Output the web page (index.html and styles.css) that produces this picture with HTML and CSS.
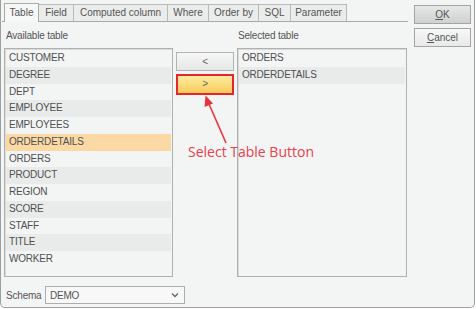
FILE: index.html
```html
<!DOCTYPE html>
<html>
<head>
<meta charset="utf-8">
<link rel="stylesheet" href="styles.css">
</head>
<body>
<div class="frame">
  <div class="main">
    <div class="tabs">
      <div class="tab active w-table">Table</div>
      <div class="tab w-field">Field</div>
      <div class="tab w-computed">Computed column</div>
      <div class="tab w-where">Where</div>
      <div class="tab w-order">Order by</div>
      <div class="tab w-sql">SQL</div>
      <div class="tab w-param">Parameter</div>
    </div>
    <div class="body">
      <div class="lbl">Available table</div>
      <div></div>
      <div class="lbl lbl-right">Selected table</div>
      <div class="list">
        <div class="row">CUSTOMER</div>
        <div class="row alt">DEGREE</div>
        <div class="row">DEPT</div>
        <div class="row alt">EMPLOYEE</div>
        <div class="row">EMPLOYEES</div>
        <div class="row sel">ORDERDETAILS</div>
        <div class="row">ORDERS</div>
        <div class="row alt">PRODUCT</div>
        <div class="row">REGION</div>
        <div class="row alt">SCORE</div>
        <div class="row">STAFF</div>
        <div class="row alt">TITLE</div>
        <div class="row">WORKER</div>
      </div>
      <div class="mid">
        <div class="mbtn">&lt;</div>
        <div class="mbtn hot">&gt;</div>
      </div>
      <div class="list">
        <div class="row">ORDERS</div>
        <div class="row alt">ORDERDETAILS</div>
      </div>
    </div>
    <div class="schema">
      <span class="slbl">Schema</span>
      <div class="select">
        <span>DEMO</span>
        <svg class="chev" width="8" height="6" viewBox="0 0 8 6"><polyline points="1,1.5 4,4.5 7,1.5" fill="none" stroke="#666" stroke-width="1.3"/></svg>
      </div>
    </div>
  </div>
  <div class="side">
    <div class="btn default"><u>O</u>K</div>
    <div class="btn"><u>C</u>ancel</div>
  </div>
  <svg class="arrow" width="476" height="309" viewBox="0 0 476 309">
    <line x1="226" y1="143" x2="209" y2="104" stroke="#e8333f" stroke-width="1.6"/>
    <polygon points="205.5,95.5 204.5,107 213,103.5" fill="#e8333f"/>
  </svg>
  <div class="note">Select Table Button</div>
</div>
</body>
</html>
```
FILE: styles.css
```css
* { box-sizing: border-box; }
html, body { margin: 0; padding: 0; background: #ffffff; }
body {
  font-family: "Liberation Sans", Arial, sans-serif;
  font-size: 10px;
  letter-spacing: -0.2px;
  color: #555;
}
.frame {
  position: relative;
  width: 475px;
  height: 308px;
  background: #f3f4f4;
  border: 1px solid #9f9f9f;
  border-top: none;
  border-radius: 0 0 5px 5px;
  padding-left: 1px;
  display: flex;
  gap: 6px;
}
.main { width: 406px; padding-top: 3px; }
.tabs {
  display: flex;
  height: 19px;
  padding-left: 2px;
  border-bottom: 1px solid #a9a9a9;
  align-items: flex-end;
}
.tab {
  height: 17px;
  border: 1px solid #b9b9b9;
  border-bottom: none;
  border-left: none;
  background: #ebecec;
  text-align: center;
  line-height: 16px;
  letter-spacing: 0;
  color: #555;
}
.tab:first-child { border-left: 1px solid #b9b9b9; }
.tab.active { height: 19px; background: #f6f7f7; margin-bottom: -1px; line-height: 18px; border-color: #a9a9a9; }
.w-table { width: 35px; }
.w-field { width: 35px; }
.w-computed { width: 94px; }
.w-where { width: 41px; }
.w-order { width: 50px; }
.w-sql { width: 32px; }
.w-param { width: 56px; }

.body {
  display: grid;
  grid-template-columns: 169px 58px 170px;
  grid-template-rows: 26px 229px;
  column-gap: 3px;
  padding-left: 2px;
}
.lbl { padding-top: 8px; line-height: 12px; padding-left: 2px; }
.lbl-right { padding-left: 1px; }
.list {
  border: 1px solid #b0b0b0;
  box-shadow: inset 1px 1px 0 #dadada;
  padding: 1px 1px 0 1px;
  background: #f3f4f4;
}
.row {
  height: 16.75px;
  line-height: 16.75px;
  padding-left: 3px;
  color: #505050;
}
.row.alt { background: #e9eaea; }
.row.sel { background: #fbd9a4; }
.mid { padding-top: 4px; display: flex; flex-direction: column; gap: 3px; }
.mbtn {
  height: 19px;
  border: 1px solid #b3b3b3;
  background: linear-gradient(#f6f6f6, #e6e7e7);
  text-align: center;
  line-height: 17px;
  color: #666;
}
.mbtn.hot {
  height: 21px;
  border: 2px solid #e8252e;
  background: linear-gradient(#fdec9f, #f7cb5a);
  line-height: 16px;
}
.schema {
  display: flex;
  align-items: center;
  margin-top: 9px;
  padding-left: 4px;
  gap: 4px;
}
.slbl { width: 35px; }
.select {
  width: 140px;
  height: 18px;
  border: 1px solid #adadad;
  background: #f8f8f8;
  display: flex;
  align-items: center;
  justify-content: space-between;
  padding: 0 5px 0 4px;
}
.side { padding-top: 5px; display: flex; flex-direction: column; gap: 4px; }
.btn {
  width: 57px;
  height: 19px;
  border: 1px solid #a4a4a4;
  background: linear-gradient(#f7f7f7, #e8e9e9);
  text-align: center;
  line-height: 17px;
  letter-spacing: 0;
}
.btn.default { background: linear-gradient(#e6e7e7, #cfd0d0); }
.arrow { position: absolute; left: -1px; top: 0; pointer-events: none; }
.note {
  position: absolute;
  left: 187px;
  top: 142px;
  font-family: "Open Sans", sans-serif;
  font-size: 14px;
  letter-spacing: 0;
  color: #e8414c;
  white-space: nowrap;
}
```
